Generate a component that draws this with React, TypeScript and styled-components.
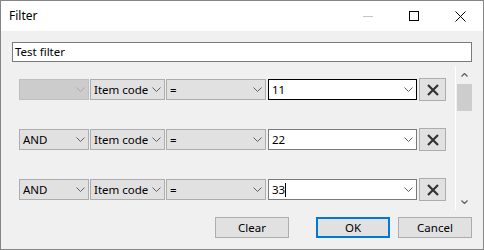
import React from 'react';
import styled, { createGlobalStyle } from 'styled-components';

const GlobalStyle = createGlobalStyle`
  html, body {
    margin: 0;
    padding: 0;
    background: #f0f0f0;
  }
  * {
    box-sizing: border-box;
  }
`;

const Window = styled.div`
  width: 484px;
  height: 250px;
  border: 1px solid #858585;
  background: #f0f0f0;
  display: flex;
  flex-direction: column;
  font-family: 'Segoe UI', 'Noto Sans', sans-serif;
  font-size: 11.5px;
  color: #000;
  overflow: hidden;
`;

const TitleBar = styled.div`
  height: 30px;
  background: #fff;
  display: flex;
  align-items: center;
  padding-left: 8px;
  flex-shrink: 0;
`;

const Title = styled.span`
  flex: 1;
  font-size: 12px;
  line-height: 16px;
`;

const CaptionButton = styled.div`
  width: 46px;
  height: 30px;
  display: flex;
  align-items: center;
  justify-content: center;
`;

const Body = styled.div`
  flex: 1;
  display: flex;
  flex-direction: column;
  padding: 11px 11px 12px 11px;
`;

const NameInput = styled.div`
  height: 20px;
  border: 1px solid #7a7a7a;
  background: #fff;
  padding-left: 2px;
  line-height: 17px;
`;

const Panel = styled.div`
  margin-top: 4px;
  height: 144px;
  display: flex;
`;

const Rows = styled.div`
  flex: 1;
  display: flex;
  flex-direction: column;
  gap: 27px;
  padding: 12px 0 0 7px;
`;

const Row = styled.div`
  display: flex;
  align-items: center;
  height: 23px;
`;

type Variant = 'normal' | 'disabled' | 'edit' | 'focus';

const borderFor = (v?: Variant) =>
  v === 'disabled' ? '#bfbfbf' : v === 'edit' ? '#7a7a7a' : v === 'focus' ? '#000' : '#adadad';

const bgFor = (v?: Variant) =>
  v === 'disabled' ? '#cccccc' : v === 'edit' || v === 'focus' ? '#fff' : '#e1e1e1';

const Combo = styled.div<{ $w: number; $gap?: number; $variant?: Variant }>`
  width: ${p => p.$w}px;
  height: 21px;
  margin-left: ${p => p.$gap ?? 1}px;
  display: flex;
  align-items: center;
  padding: 0 0 0 3px;
  border: 1px solid ${p => borderFor(p.$variant)};
  background: ${p => bgFor(p.$variant)};
  &:first-child {
    margin-left: 0;
  }
`;

const ComboText = styled.span`
  flex: 1;
  line-height: 16px;
  white-space: nowrap;
`;

const Chevron = styled.span<{ $light?: boolean }>`
  width: 16px;
  flex-shrink: 0;
  display: flex;
  align-items: center;
  justify-content: center;
  color: ${p => (p.$light ? '#aaaaaa' : '#606060')};
`;

const Caret = styled.span`
  display: inline-block;
  width: 1px;
  height: 14px;
  background: #000;
  vertical-align: -3px;
`;

const DeleteButton = styled.div`
  width: 27px;
  height: 23px;
  margin-left: 2px;
  border: 1px solid #adadad;
  background: #e1e1e1;
  display: flex;
  align-items: center;
  justify-content: center;
`;

const ScrollBar = styled.div`
  width: 17px;
  border-left: 1px solid #ffffff;
  background: #f0f0f0;
  display: flex;
  flex-direction: column;
  align-items: center;
`;

const ScrollArrow = styled.div`
  height: 17px;
  width: 16px;
  display: flex;
  align-items: center;
  justify-content: center;
`;

const Thumb = styled.div`
  width: 15px;
  height: 27px;
  background: #cdcdcd;
  margin-top: 1px;
`;

const ScrollTrack = styled.div`
  flex: 1;
`;

const Buttons = styled.div`
  margin-top: 7px;
  display: flex;
  justify-content: flex-end;
  gap: 8px;
`;

const Button = styled.div<{ $primary?: boolean; $gapBefore?: number }>`
  width: 74px;
  height: 21px;
  border: ${p => (p.$primary ? '2px solid #0078d7' : '1px solid #adadad')};
  background: #e1e1e1;
  display: flex;
  align-items: center;
  justify-content: center;
  margin-left: ${p => p.$gapBefore ?? 0}px;
  line-height: 16px;
`;

const ChevronIcon = ({ light }: { light?: boolean }) => (
  <Chevron $light={light}>
    <svg width="9" height="5" viewBox="0 0 9 5">
      <path d="M0.5 0.5 L4.5 4.5 L8.5 0.5" fill="none" stroke="currentColor" strokeWidth="1" />
    </svg>
  </Chevron>
);

const DeleteIcon = () => (
  <svg width="12" height="12" viewBox="0 0 12 12">
    <path d="M1 1 L11 11 M11 1 L1 11" stroke="#333" strokeWidth="2.2" fill="none" />
  </svg>
);

type Rule = { join: string; value: string; focused?: boolean; caret?: boolean };

const rules: Rule[] = [
  { join: '', value: '11', focused: true },
  { join: 'AND', value: '22' },
  { join: 'AND', value: '33', caret: true },
];

export default function App() {
  return (
    <>
      <GlobalStyle />
      <Window>
        <TitleBar>
          <Title>Filter</Title>
          <CaptionButton>
            <svg width="10" height="10" viewBox="0 0 10 10">
              <path d="M0 5.5 H10" stroke="#c4c4c4" strokeWidth="1" />
            </svg>
          </CaptionButton>
          <CaptionButton>
            <svg width="10" height="10" viewBox="0 0 10 10">
              <rect x="0.5" y="0.5" width="9" height="9" fill="none" stroke="#000" strokeWidth="1" />
            </svg>
          </CaptionButton>
          <CaptionButton>
            <svg width="11" height="11" viewBox="0 0 11 11">
              <path d="M0.5 0.5 L10.5 10.5 M10.5 0.5 L0.5 10.5" stroke="#000" strokeWidth="1" fill="none" />
            </svg>
          </CaptionButton>
        </TitleBar>
        <Body>
          <NameInput>Test filter</NameInput>
          <Panel>
            <Rows>
              {rules.map((r, i) => (
                <Row key={i}>
                  <Combo $w={70} $variant={r.join ? 'normal' : 'disabled'}>
                    <ComboText>{r.join}</ComboText>
                    <ChevronIcon light={!r.join} />
                  </Combo>
                  <Combo $w={75}>
                    <ComboText>Item code</ComboText>
                    <ChevronIcon />
                  </Combo>
                  <Combo $w={100}>
                    <ComboText>=</ComboText>
                    <ChevronIcon />
                  </Combo>
                  <Combo $w={149} $gap={2} $variant={r.focused ? 'focus' : 'edit'}>
                    <ComboText>
                      {r.value}
                      {r.caret && <Caret />}
                    </ComboText>
                    <ChevronIcon />
                  </Combo>
                  <DeleteButton>
                    <DeleteIcon />
                  </DeleteButton>
                </Row>
              ))}
            </Rows>
            <ScrollBar>
              <ScrollArrow>
                <svg width="7" height="4" viewBox="0 0 7 4">
                  <path d="M0.5 3.5 L3.5 0.5 L6.5 3.5" fill="none" stroke="#606060" strokeWidth="1.3" />
                </svg>
              </ScrollArrow>
              <Thumb />
              <ScrollTrack />
              <ScrollArrow>
                <svg width="7" height="4" viewBox="0 0 7 4">
                  <path d="M0.5 0.5 L3.5 3.5 L6.5 0.5" fill="none" stroke="#606060" strokeWidth="1.3" />
                </svg>
              </ScrollArrow>
            </ScrollBar>
          </Panel>
          <Buttons>
            <Button>Clear</Button>
            <Button $primary $gapBefore={19}>OK</Button>
            <Button>Cancel</Button>
          </Buttons>
        </Body>
      </Window>
    </>
  );
}
